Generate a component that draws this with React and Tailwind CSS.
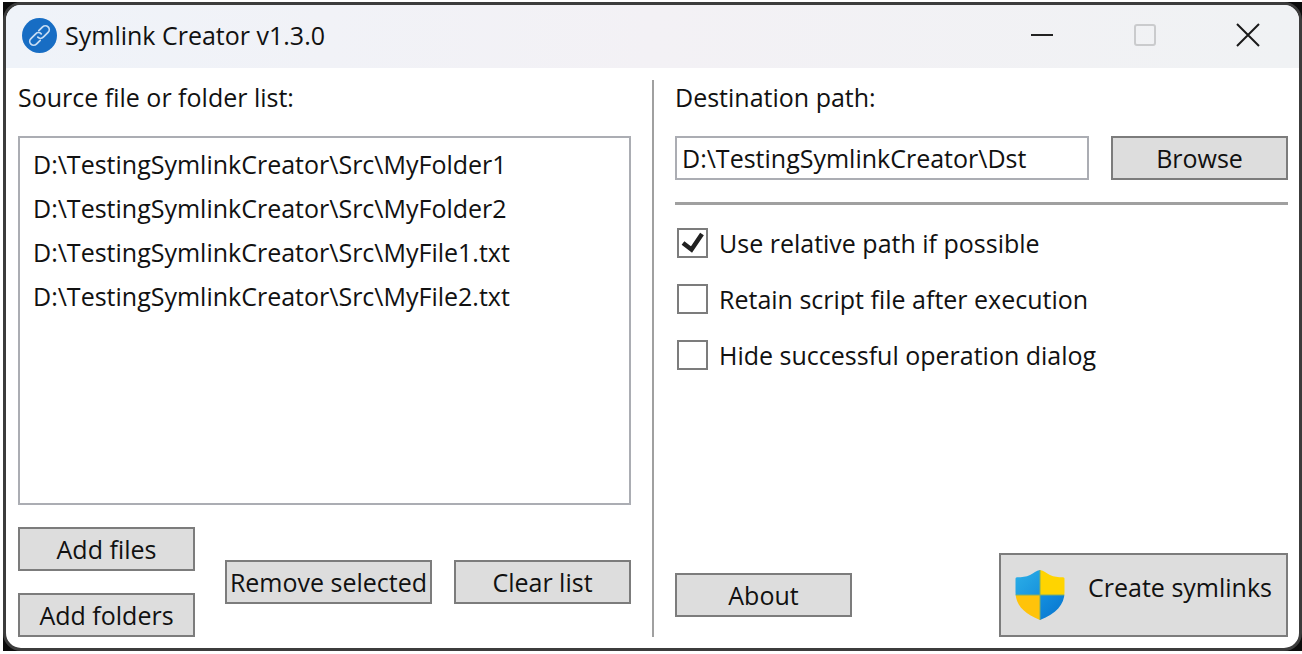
import { useState } from 'react';

const initialSources = [
  'D:\\TestingSymlinkCreator\\Src\\MyFolder1',
  'D:\\TestingSymlinkCreator\\Src\\MyFolder2',
  'D:\\TestingSymlinkCreator\\Src\\MyFile1.txt',
  'D:\\TestingSymlinkCreator\\Src\\MyFile2.txt',
];

function LinkLogo() {
  return (
    <svg width="35" height="35" viewBox="0 0 36 36" fill="none" aria-hidden="true">
      <circle cx="18" cy="18" r="18" fill="#176dc4" />
      <g transform="rotate(-45 18 18)" stroke="#c6dcf3" strokeWidth="1.8" strokeLinecap="round">
        <path d="M15 22H9.500a4 4 0 0 1 0-8h7a4 4 0 0 1 4 4" />
        <path d="M21 14h5.500a4 4 0 0 1 0 8h-7a4 4 0 0 1-4-4" />
      </g>
    </svg>
  );
}

function ShieldIcon() {
  return (
    <svg width="50" height="50" viewBox="0 0 50 50" aria-hidden="true" className="shrink-0">
      <defs>
        <clipPath id="shield">
          <path d="M25 0C29 .5 31 3 35 5c4 2 8 2.200 13 2.300 1 0 1.500.7 1.500 1.700v13C49.500 35 41 43.500 25 50 9 43.500.5 35 .5 22V9c0-1 .5-1.700 1.500-1.700C7 7.200 11 7 15 5c4-2 6-4.500 10-5z" />
        </clipPath>
        <linearGradient id="blueTop" x1="0" y1="0" x2="1" y2="1">
          <stop offset="0" stopColor="#2cb0e8" />
          <stop offset="1" stopColor="#1893dd" />
        </linearGradient>
        <linearGradient id="blueBottom" x1="0" y1="0" x2="1" y2="1">
          <stop offset="0" stopColor="#1490e0" />
          <stop offset="1" stopColor="#0672cc" />
        </linearGradient>
      </defs>
      <g clipPath="url(#shield)">
        <path fill="url(#blueTop)" d="M0 0h25v25H0z" />
        <path fill="#ffd400" d="M25 0h25v25H25z" />
        <path fill="#ffc30a" d="M0 25h25v25H0z" />
        <path fill="url(#blueBottom)" d="M25 25h25v25H25z" />
        <path stroke="#7fae6a" d="M25 0v50M0 25h50" />
      </g>
    </svg>
  );
}

function Button({ className = '', children, ...props }) {
  return (
    <button
      type="button"
      className={`h-11 border-2 border-[#7c7c7c] bg-[#dddddd] whitespace-nowrap flex items-center justify-center hover:bg-[#bee6fd] ${className}`}
      {...props}
    >
      {children}
    </button>
  );
}

function CheckOption({ id, label, checked, onChange }) {
  return (
    <div className="flex items-center gap-[11px] h-[34px] pl-[2px]">
      <span className="grid shrink-0">
        <input
          id={id}
          type="checkbox"
          checked={checked}
          onChange={(e) => onChange(e.target.checked)}
          className="peer appearance-none col-start-1 row-start-1 w-[31px] h-[30px] border-2 border-[#7c7c7c] bg-white"
        />
        <svg
          width="31"
          height="30"
          viewBox="0 0 31 30"
          fill="none"
          className="col-start-1 row-start-1 pointer-events-none invisible peer-checked:visible"
        >
          <path d="M6 15l8.500 6.500L25 6" stroke="#212121" strokeWidth="4.500" />
        </svg>
      </span>
      <label htmlFor={id}>{label}</label>
    </div>
  );
}

export default function App() {
  const [sources, setSources] = useState(initialSources);
  const [selected, setSelected] = useState(null);
  const [destination, setDestination] = useState('D:\\TestingSymlinkCreator\\Dst');
  const [relative, setRelative] = useState(true);
  const [retain, setRetain] = useState(false);
  const [hideDialog, setHideDialog] = useState(false);

  const removeSelected = () => {
    setSources(sources.filter((s) => s !== selected));
    setSelected(null);
  };

  return (
    <div className="min-h-screen flex bg-white pt-[2px] pl-[3px] pb-[3px] font-['Open_Sans','Noto_Sans',sans-serif] text-[25px] leading-[34px] text-[#111111]">
      <div className="flex-1 flex bg-[#0c0c0c]">
        <div className="flex-1 flex flex-col rounded-[18px] overflow-hidden border-[3px] border-[#3c3c3c] bg-white">
          <header className="h-[63px] pb-[3px] flex items-center bg-linear-to-r from-[#eff3f9] via-[#f3f1f5] to-[#f0f2f4]">
            <div className="flex items-center gap-2 pl-4 flex-1">
              <LinkLogo />
              <h1>Symlink Creator v1.3.0</h1>
            </div>
            <button type="button" aria-label="Minimize" className="w-[103px] h-full flex items-center justify-center">
              <svg width="24" height="24" fill="none" stroke="#222222" strokeWidth="2">
                <path d="M1 12h22" />
              </svg>
            </button>
            <button type="button" aria-label="Maximize" disabled className="w-[103px] h-full flex items-center justify-center">
              <svg width="24" height="24" fill="none" stroke="#cacbcd" strokeWidth="2">
                <rect x="2" y="2" width="20" height="20" rx="2" />
              </svg>
            </button>
            <button type="button" aria-label="Close" className="w-[103px] h-full flex items-center justify-center">
              <svg width="24" height="24" fill="none" stroke="#1a1a1a" strokeWidth="2">
                <path d="M1 1l22 22M23 1L1 23" />
              </svg>
            </button>
          </header>

          <main className="flex-1 grid grid-cols-[1fr_2px_1fr] gap-[21px] pl-3 pr-[11px] pt-3 pb-[11px]">
            <section className="flex flex-col">
              <h2 id="sources" className="mb-[20px] h-9">Source file or folder list:</h2>
              <ul role="listbox" aria-labelledby="sources" className="flex-1 border-2 border-[#abadb3] pt-1 px-[13px]">
                {sources.map((s) => (
                  <li
                    key={s}
                    role="option"
                    aria-selected={s === selected}
                    onClick={() => setSelected(s)}
                    className="h-11 flex items-center aria-selected:bg-[#cbe8f6]"
                  >
                    {s}
                  </li>
                ))}
              </ul>
              <div className="mt-[22px] flex items-center justify-between">
                <div className="flex flex-col gap-[22px]">
                  <Button className="w-[177px]">Add files</Button>
                  <Button className="w-[177px]">Add folders</Button>
                </div>
                <div className="flex gap-[22px]">
                  <Button className="w-[207px]" onClick={removeSelected}>Remove selected</Button>
                  <Button className="w-[177px]" onClick={() => setSources([])}>Clear list</Button>
                </div>
              </div>
            </section>

            <div className="bg-[#a0a0a0]" />

            <section className="flex flex-col">
              <label htmlFor="destination" className="mb-[20px] h-9">Destination path:</label>
              <div className="flex gap-[22px]">
                <input
                  id="destination"
                  type="text"
                  value={destination}
                  onChange={(e) => setDestination(e.target.value)}
                  className="flex-1 min-w-0 h-11 border-2 border-[#abadb3] px-[5px]"
                />
                <Button className="w-[177px]">Browse</Button>
              </div>
              <hr className="mt-[22px] border-t-[3px] border-[#a0a0a0]" />
              <div className="mt-[21px] flex flex-col gap-[22px]">
                <CheckOption id="relative" label="Use relative path if possible" checked={relative} onChange={setRelative} />
                <CheckOption id="retain" label="Retain script file after execution" checked={retain} onChange={setRetain} />
                <CheckOption id="hide" label="Hide successful operation dialog" checked={hideDialog} onChange={setHideDialog} />
              </div>
              <div className="mt-auto flex items-center justify-between">
                <Button className="w-[177px]">About</Button>
                <button
                  type="button"
                  className="w-[289px] border-2 border-[#7c7c7c] bg-[#dddddd] px-[14px] py-[15px] flex items-start justify-between whitespace-nowrap hover:bg-[#bee6fd]"
                >
                  <ShieldIcon />
                  <span>Create symlinks</span>
                </button>
              </div>
            </section>
          </main>
        </div>
      </div>
    </div>
  );
}
